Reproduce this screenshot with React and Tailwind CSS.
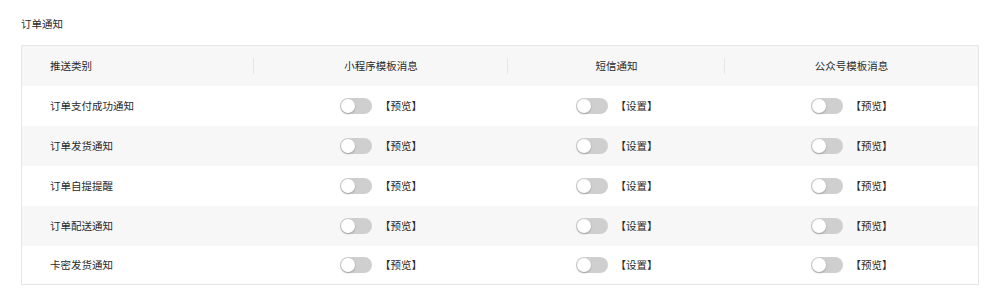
import React from "react";

const rows = ["订单支付成功通知", "订单发货通知", "订单自提提醒", "订单配送通知", "卡密发货通知"];

function Toggle() {
  return (
    <span className="relative inline-block w-[32px] h-[16px] rounded-full bg-[#cfcfcf] shrink-0">
      <span className="absolute left-[1px] top-[1px] w-[14px] h-[14px] rounded-full bg-white shadow-[0_1px_2px_rgba(0,0,0,0.25)]" />
    </span>
  );
}

function Cell({ label }) {
  return (
    <div className="flex items-center justify-center gap-[8px]">
      <Toggle />
      <span>{label}</span>
    </div>
  );
}

export default function App() {
  return (
    <div className="w-[1000px] h-[303px] bg-white px-[21px] pt-[17px] text-[10.5px] text-[#2a2a2a] font-['Noto_Sans_CJK_SC',sans-serif]">
      <div className="h-[14px] leading-[14px] mb-[14px]">订单通知</div>
      <div className="border border-[#e6e6e6]">
        <div className="grid grid-cols-[232px_254px_217px_253px] h-[40px] bg-[#f7f7f7] items-center">
          <div className="pl-[28px] relative h-full flex items-center">
            推送类别
            <span className="absolute right-0 top-[12px] h-[16px] w-px bg-[#e6e6e6]" />
          </div>
          <div className="relative h-full flex items-center justify-center">
            小程序模板消息
            <span className="absolute right-0 top-[12px] h-[16px] w-px bg-[#e6e6e6]" />
          </div>
          <div className="relative h-full flex items-center justify-center">
            短信通知
            <span className="absolute right-0 top-[12px] h-[16px] w-px bg-[#e6e6e6]" />
          </div>
          <div className="h-full flex items-center justify-center">公众号模板消息</div>
        </div>
        {rows.map((r, i) => (
          <div
            key={r}
            className={`grid grid-cols-[232px_254px_217px_253px] ${i === 4 ? "h-[38px]" : "h-[40px]"} items-center ${i % 2 === 1 ? "bg-[#f7f7f7]" : "bg-white"}`}
          >
            <div className="pl-[28px]">{r}</div>
            <Cell label="【预览】" />
            <Cell label="【设置】" />
            <Cell label="【预览】" />
          </div>
        ))}
      </div>
    </div>
  );
}
